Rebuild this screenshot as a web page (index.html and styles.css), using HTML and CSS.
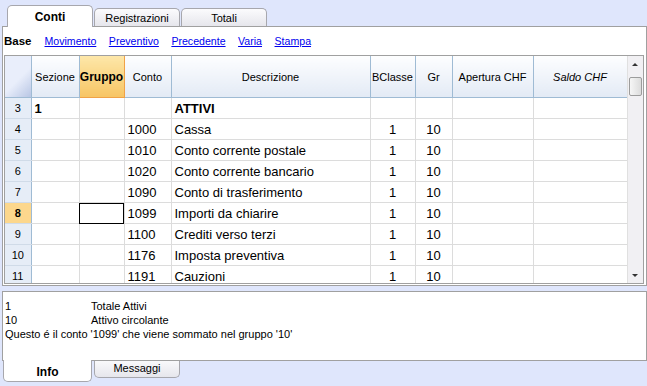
FILE: index.html
```html
<!DOCTYPE html>
<html lang="it">
<head>
    <meta charset="UTF-8">
    <title>Conti</title>
    <link rel="stylesheet" href="styles.css">
</head>
<body>
    <div class="app">
        <div class="tabs-top">
            <div class="tab active">Conti</div>
            <div class="tab">Registrazioni</div>
            <div class="tab">Totali</div>
        </div>

        <div class="panel">
            <div class="views">
                <b>Base</b>
                <a href="#">Movimento</a>
                <a href="#">Preventivo</a>
                <a href="#">Precedente</a>
                <a href="#">Varia</a>
                <a href="#">Stampa</a>
            </div>

            <div class="grid">
                <div class="grid-body">
                    <table>
                        <colgroup>
                            <col class="w-num"><col class="w-sez"><col class="w-gru">
                            <col class="w-con"><col class="w-des"><col class="w-bcl">
                            <col class="w-gr"><col class="w-ape"><col class="w-sal">
                        </colgroup>
                        <thead>
                            <tr>
                                <th class="corner"></th>
                                <th>Sezione</th>
                                <th class="sel">Gruppo</th>
                                <th>Conto</th>
                                <th>Descrizione</th>
                                <th>BClasse</th>
                                <th>Gr</th>
                                <th>Apertura CHF</th>
                                <th><i>Saldo CHF</i></th>
                            </tr>
                        </thead>
                        <tbody>
                            <tr class="bold"><td class="num">3</td><td>1</td><td></td><td></td><td>ATTIVI</td><td></td><td></td><td></td><td></td></tr>
                            <tr><td class="num">4</td><td></td><td></td><td>1000</td><td>Cassa</td><td class="c">1</td><td class="c">10</td><td></td><td></td></tr>
                            <tr><td class="num">5</td><td></td><td></td><td>1010</td><td>Conto corrente postale</td><td class="c">1</td><td class="c">10</td><td></td><td></td></tr>
                            <tr><td class="num">6</td><td></td><td></td><td>1020</td><td>Conto corrente bancario</td><td class="c">1</td><td class="c">10</td><td></td><td></td></tr>
                            <tr><td class="num">7</td><td></td><td></td><td>1090</td><td>Conto di trasferimento</td><td class="c">1</td><td class="c">10</td><td></td><td></td></tr>
                            <tr><td class="num cur">8</td><td></td><td class="focus"></td><td>1099</td><td>Importi da chiarire</td><td class="c">1</td><td class="c">10</td><td></td><td></td></tr>
                            <tr><td class="num">9</td><td></td><td></td><td>1100</td><td>Crediti verso terzi</td><td class="c">1</td><td class="c">10</td><td></td><td></td></tr>
                            <tr><td class="num">10</td><td></td><td></td><td>1176</td><td>Imposta preventiva</td><td class="c">1</td><td class="c">10</td><td></td><td></td></tr>
                            <tr><td class="num">11</td><td></td><td></td><td>1191</td><td>Cauzioni</td><td class="c">1</td><td class="c">10</td><td></td><td></td></tr>
                        </tbody>
                    </table>
                </div>
                <div class="scrollbar">
                    <div class="arrow up"></div>
                    <div class="thumb"></div>
                    <div class="track"></div>
                    <div class="arrow down"></div>
                </div>
            </div>
        </div>

        <div class="info">
            <div class="info-row"><span class="key">1</span>Totale Attivi</div>
            <div class="info-row"><span class="key">10</span>Attivo circolante</div>
            <div class="info-row">Questo é il conto '1099' che viene sommato nel gruppo '10'</div>
        </div>

        <div class="tabs-bottom">
            <div class="btab active">Info</div>
            <div class="btab">Messaggi</div>
        </div>
    </div>
</body>
</html>
```

FILE: styles.css
```css
body {
    margin: 0;
    background: #dfe6fc;
    font-family: "Liberation Sans", Arial, sans-serif;
    color: #000;
}
.app {
    width: 647px;
    height: 386px;
    overflow: hidden;
}

/* top tabs */
.tabs-top {
    height: 26px;
    display: flex;
    align-items: flex-end;
    padding-left: 7px;
}
.tab {
    width: 84px;
    height: 17px;
    margin-right: 1px;
    border: 1px solid #a7a7ad;
    border-bottom: none;
    border-radius: 5px 5px 0 0;
    background: linear-gradient(#fbfbfd, #e6e6ec);
    font-size: 11px;
    text-align: center;
    line-height: 18px;
}
.tab.active {
    height: 21px;
    line-height: 23px;
    background: #fff;
    font-weight: bold;
    font-size: 12px;
    position: relative;
    z-index: 1;
    margin-bottom: -1px;
}

/* main panel */
.panel {
    height: 258px;
    margin-left: 2px;
    width: 643px;
    border: 1px solid #a0a0a0;
    background: #fff;
}
.views {
    height: 28px;
    display: flex;
    align-items: center;
    padding-left: 1px;
    font-size: 10.6px;
}
.views b {
    margin-right: 13px;
    font-size: 11.5px;
}
.views a {
    color: #0000ee;
    margin-right: 12.5px;
}

.grid {
    margin-left: 1px;
    width: 638px;
    height: 227px;
    border: 1px solid #a0a0a0;
    display: flex;
    overflow: hidden;
}
.grid-body {
    width: 622px;
    overflow: hidden;
}
table {
    border-collapse: collapse;
    table-layout: fixed;
    width: 622px;
    font-size: 13px;
}
.w-num { width: 26px; }
.w-sez { width: 48px; }
.w-gru { width: 45px; }
.w-con { width: 47px; }
.w-des { width: 199px; }
.w-bcl { width: 45px; }
.w-gr  { width: 37px; }
.w-ape { width: 81px; }
.w-sal { width: 94px; }
th {
    height: 41px;
    padding: 0;
    font-weight: normal;
    font-size: 11px;
    background: linear-gradient(#fdfeff, #e3eaf5);
    border-right: 1px solid #9fbbd4;
    border-bottom: 1px solid #9fbbd4;
    white-space: nowrap;
}
th.corner {
    background: linear-gradient(135deg, #e9eefb 55%, #b8c6e4);
}
th.sel {
    font-weight: bold;
    font-size: 12px;
    background: linear-gradient(#fde7a9, #f7c564);
    border-right-color: #f0a247;
    border-bottom-color: #f0a247;
}
td {
    height: 20px;
    padding: 0 0 0 3px;
    border-right: 1px solid #dcdcdc;
    border-bottom: 1px solid #dcdcdc;
    white-space: nowrap;
    overflow: hidden;
}
td.c {
    text-align: center;
    padding: 0;
}
td.num {
    padding: 0;
    text-align: center;
    font-size: 11px;
    background: #e6edf7;
    border-right-color: #9fbbd4;
    border-bottom-color: #d0dbe8;
}
td.num.cur {
    background: #fcd78d;
    font-weight: bold;
}
td.focus {
    outline: 1px solid #000;
    outline-offset: -1px;
}
tr.bold td {
    font-weight: bold;
}
tr.bold td.num {
    font-weight: normal;
}

/* scrollbar */
.scrollbar {
    width: 15px;
    display: flex;
    flex-direction: column;
    background: #f1f0f3;
    border-left: 1px solid #e0e0e0;
}
.arrow {
    height: 17px;
    position: relative;
}
.arrow::after {
    content: "";
    position: absolute;
    left: 4px;
    border-left: 3px solid transparent;
    border-right: 3px solid transparent;
}
.arrow.up::after {
    top: 7px;
    border-bottom: 3px solid #333;
}
.arrow.down::after {
    top: 8px;
    border-top: 3px solid #333;
}
.thumb {
    height: 17px;
    margin: 4px 1px 0;
    border: 1px solid #9c9c9c;
    border-radius: 2px;
    background: linear-gradient(90deg, #f6f6f6, #dcdcdc);
}
.track {
    flex: 1;
}

/* info panel */
.info {
    margin: 5px 0 0 2px;
    width: 641px;
    height: 61px;
    border: 1px solid #a0a0a0;
    background: #fff;
    padding: 7px 0 0 2px;
    font-size: 11px;
}
.info-row {
    height: 14px;
    line-height: 14px;
}
.key {
    display: inline-block;
    width: 86px;
}

/* bottom tabs */
.tabs-bottom {
    display: flex;
    padding-left: 3px;
}
.btab {
    width: 84px;
    height: 16px;
    margin-left: 2px;
    border: 1px solid #a7a7ad;
    border-top: none;
    border-radius: 0 0 5px 5px;
    background: linear-gradient(#f9f9fb, #e6e6ec);
    font-size: 11px;
    text-align: center;
    line-height: 14px;
}
.btab.active {
    margin-left: 0;
    width: 87px;
    height: 21px;
    margin-top: -1px;
    background: #fff;
    font-weight: bold;
    line-height: 24px;
    font-size: 12px;
}
```
